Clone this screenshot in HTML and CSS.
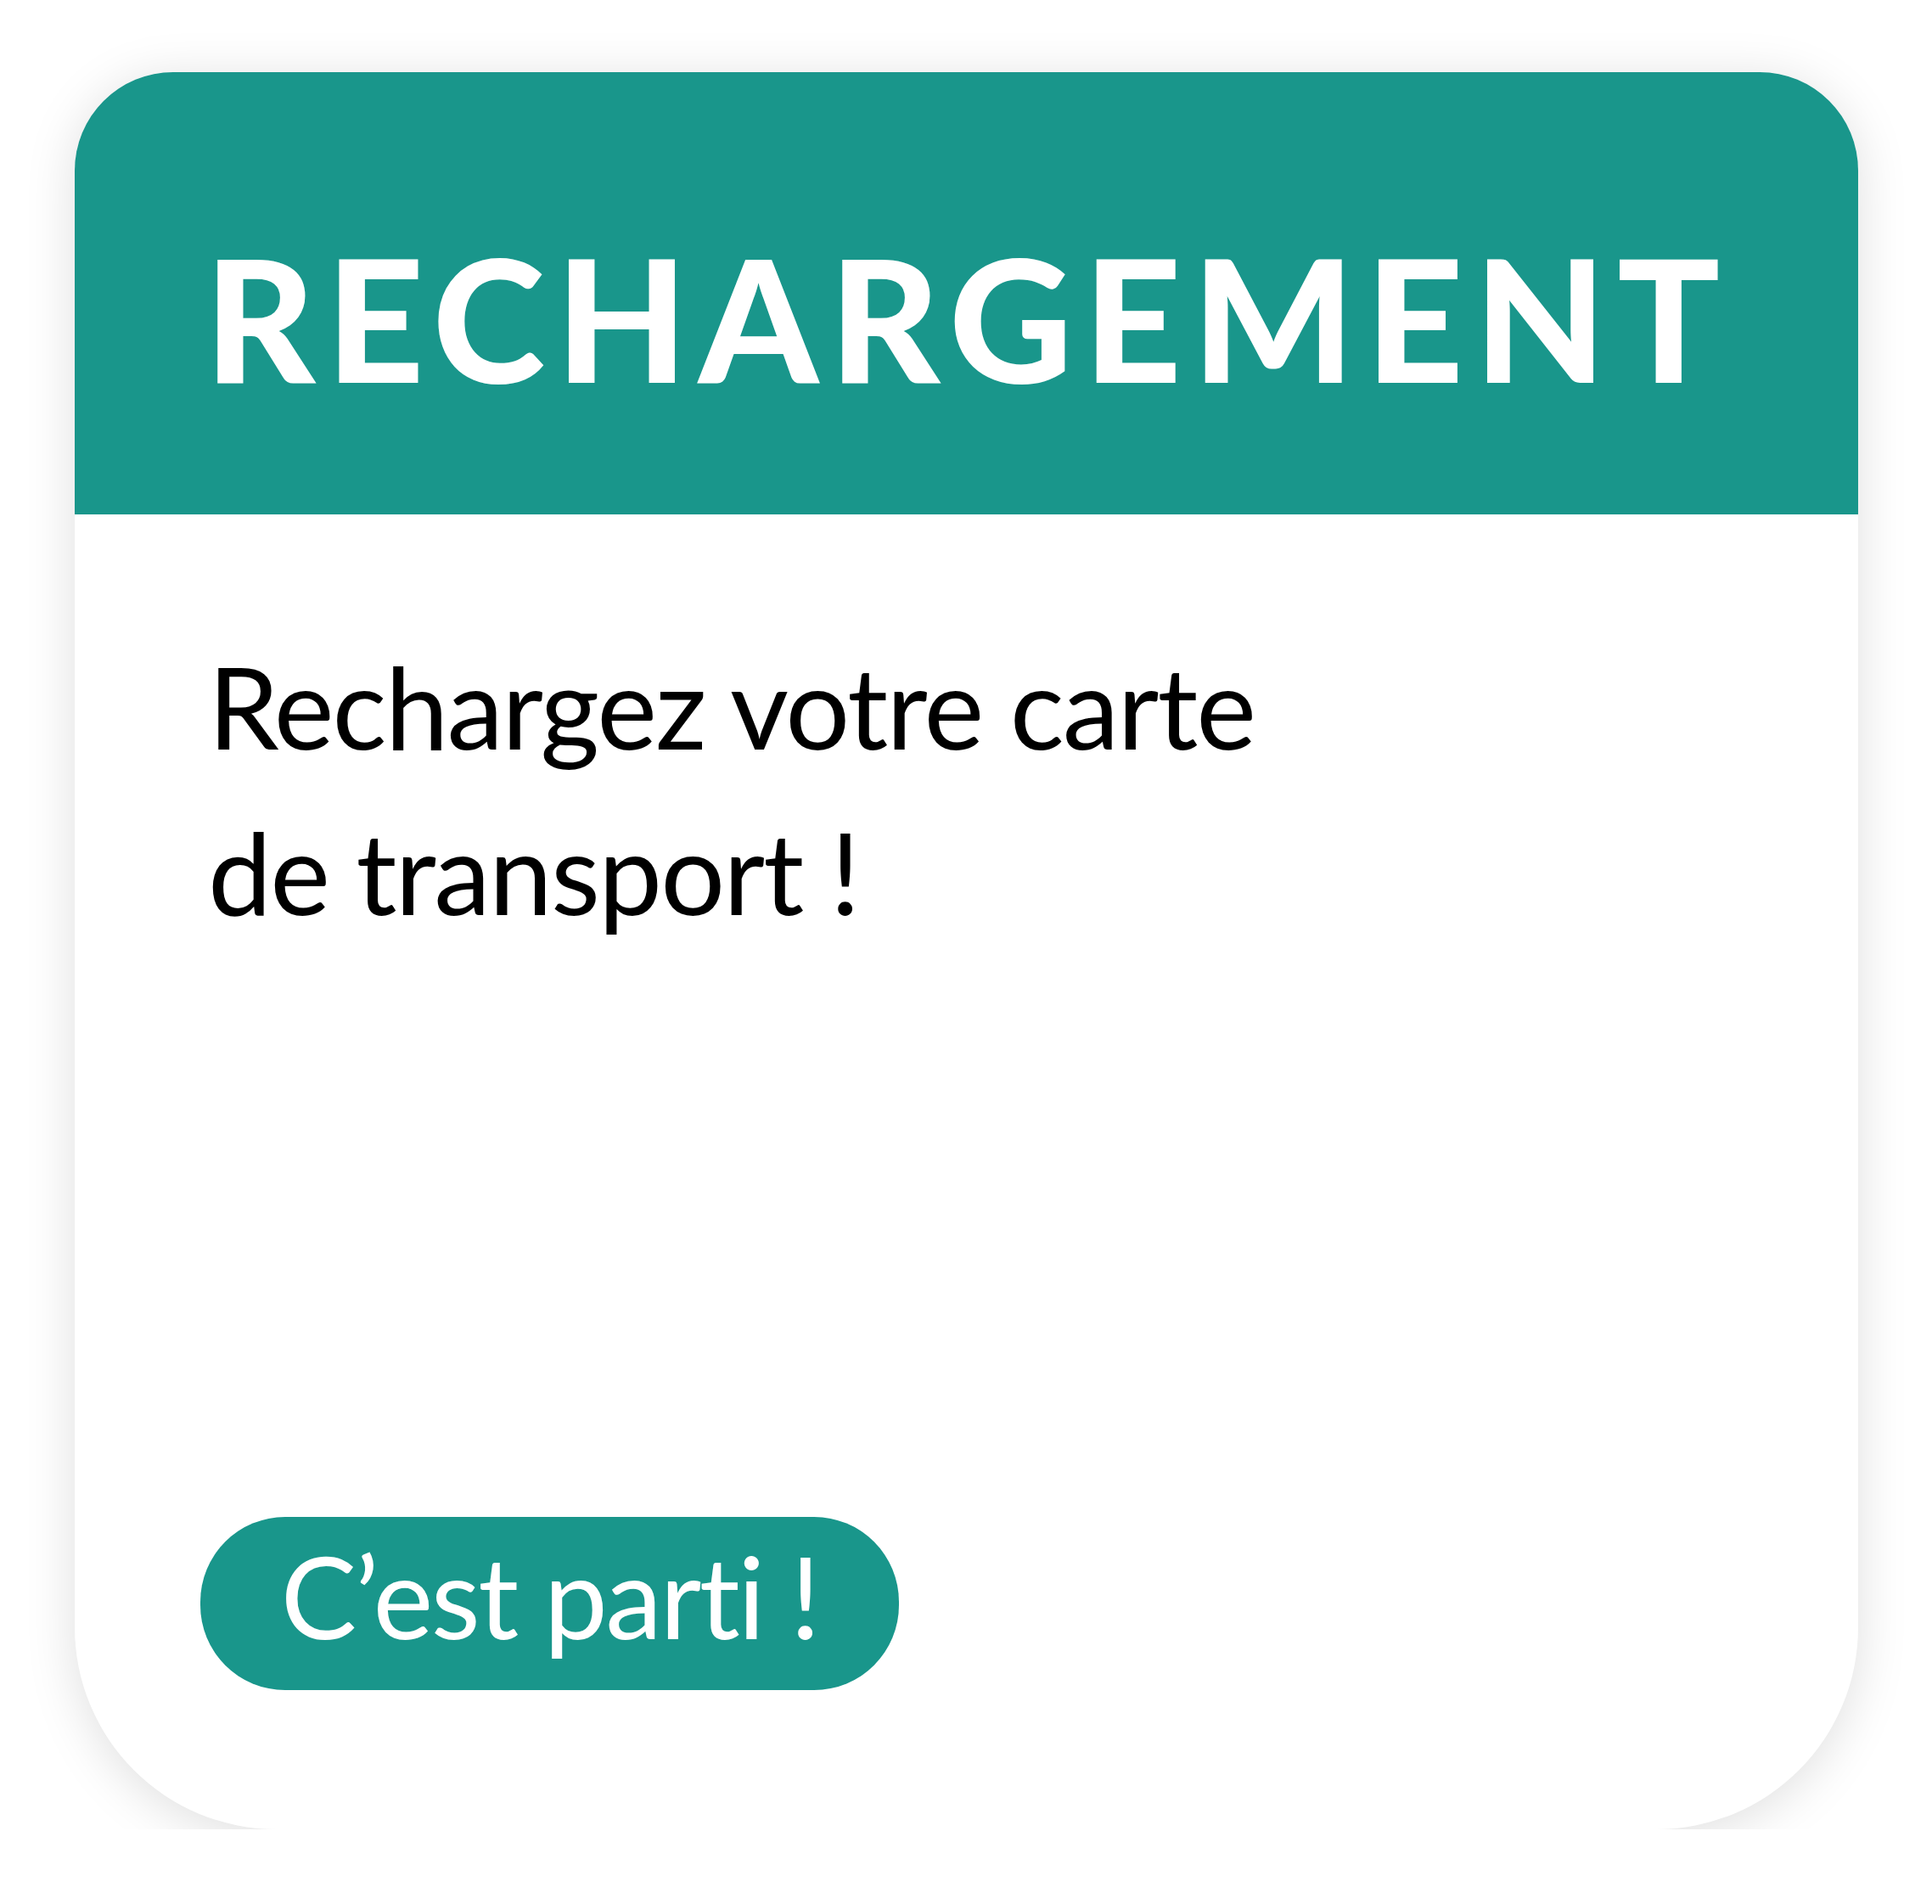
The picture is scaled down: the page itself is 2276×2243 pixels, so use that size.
FILE: index.html
```html
<!DOCTYPE html>
<html lang="fr">
<head>
<meta charset="utf-8">
<title>Rechargement</title>
<link rel="stylesheet" href="styles.css">
</head>
<body>
<div class="card">
  <div class="card-header">
    <h1 class="title">RECHARGEMENT</h1>
  </div>
  <div class="card-body">
    <p class="lead">Rechargez votre carte<br>de transport&nbsp;!</p>
    <a class="cta" href="#">C’est parti&nbsp;!</a>
  </div>
</div>
</body>
</html>
```

FILE: styles.css
```css
html, body {
  margin: 0;
  padding: 0;
  background: #ffffff;
}

body {
  padding: 85px 0 0 88px;
}

.card {
  width: 2101px;
  height: 2070px;
  background: #ffffff;
  border-radius: 116px 116px 238px 238px;
  box-shadow: 0 8px 60px rgba(0, 0, 0, 0.13);
  overflow: hidden;
  display: flex;
  flex-direction: column;
}

.card-header {
  height: 521px;
  background: #19968b;
  box-sizing: border-box;
  padding: 0 0 0 153px;
}

.title {
  margin: 0;
  padding-top: 188px;
  font-family: "Lato", "Liberation Sans", sans-serif;
  font-weight: 900;
  font-size: 201px;
  line-height: 1;
  color: #ffffff;
  letter-spacing: 12.8px;
  white-space: nowrap;
}

.card-body {
  flex: 1;
  display: flex;
  flex-direction: column;
  align-items: flex-start;
  padding: 128px 0 164px 157px;
}

.lead {
  margin: 0;
  font-family: "Lato", "Liberation Sans", sans-serif;
  font-weight: 400;
  font-size: 134px;
  line-height: 195px;
  letter-spacing: -1.9px;
  font-variant-ligatures: none;
  color: #000000;
}

.cta {
  margin-top: auto;
  margin-left: -9px;
  width: 823px;
  height: 204px;
  border-radius: 100px;
  background: #19968b;
  color: #ffffff;
  text-decoration: none;
  display: flex;
  align-items: center;
  justify-content: center;
  font-family: "Lato", "Liberation Sans", sans-serif;
  font-weight: 400;
  font-size: 134px;
  line-height: 1;
  letter-spacing: -2.5px;
  font-variant-ligatures: none;
  padding-bottom: 18px;
  box-sizing: border-box;
}
```
